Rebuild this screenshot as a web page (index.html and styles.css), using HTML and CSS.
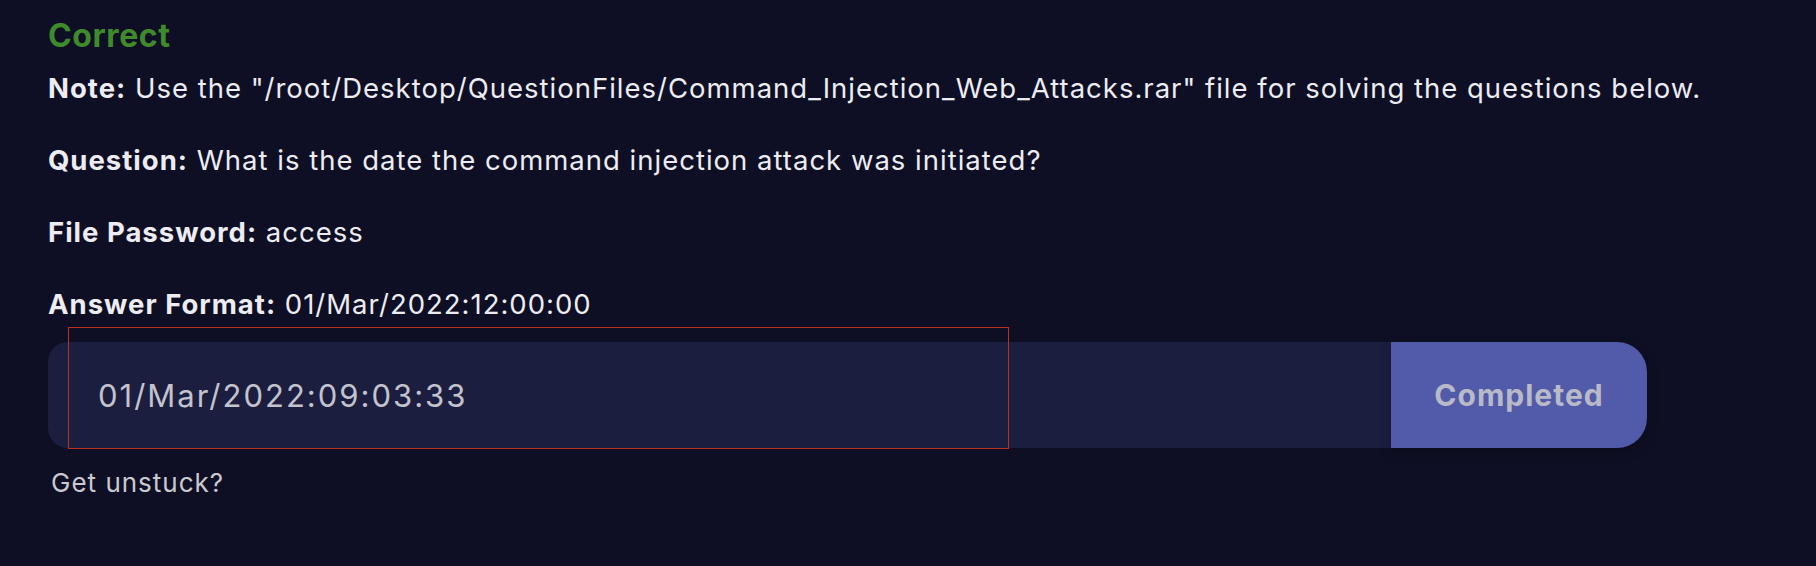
FILE: index.html
```html
<!DOCTYPE html>
<html lang="en">
<head>
<meta charset="utf-8">
<title>Question</title>
<link rel="stylesheet" href="styles.css">
</head>
<body>
<div class="task">
  <h3 class="status">Correct</h3>
  <p class="line"><strong>Note:</strong> Use the "/root/Desktop/QuestionFiles/Command_Injection_Web_Attacks.rar" file for solving the questions below.</p>
  <p class="line"><strong>Question:</strong> What is the date the command injection attack was initiated?</p>
  <p class="line"><strong>File Password:</strong> access</p>
  <p class="line last"><strong>Answer Format:</strong> 01/Mar/2022:12:00:00</p>
  <div class="answer-wrap">
    <form class="answer">
      <div class="field">01/Mar/2022:09:03:33</div>
      <button type="button" class="submit">Completed</button>
    </form>
    <div class="highlight"></div>
  </div>
  <a class="hint">Get unstuck?</a>
</div>
</body>
</html>
```

FILE: styles.css
```css
html, body {
  margin: 0;
  padding: 0;
  background: #0e0f24;
  height: 100%;
}

body {
  font-family: "Inter", "Open Sans", sans-serif;
  color: #ececf2;
}

.task {
  padding: 16px 0 0 48px;
}

.status {
  margin: 0 0 12px;
  font-size: 32px;
  line-height: 40px;
  font-weight: 700;
  letter-spacing: 0.6px;
  color: #3f8a2b;
}

.line {
  margin: 0 0 32px;
  font-size: 27.5px;
  line-height: 40px;
  font-weight: 400;
  letter-spacing: 1px;
}

.line strong {
  font-weight: 700;
}

.line.last {
  margin-bottom: 18px;
}

.answer-wrap {
  position: relative;
  width: 1599px;
}

.answer {
  display: flex;
  height: 106px;
  margin: 0;
}

.field {
  flex: 1;
  display: flex;
  align-items: center;
  padding-left: 50px;
  background: #1c1e40;
  border-radius: 20px 0 0 20px;
  font-size: 31px;
  letter-spacing: 2px;
  color: #c3c3cd;
}

.submit {
  width: 256px;
  border: none;
  background: #515ba9;
  border-radius: 0 30px 30px 0;
  font-family: inherit;
  font-size: 30px;
  font-weight: 700;
  letter-spacing: 1px;
  color: #b9bac8;
  box-shadow: 0 4px 12px rgba(0, 0, 0, 0.25);
}

.highlight {
  position: absolute;
  left: 20px;
  top: -15px;
  width: 941px;
  height: 122px;
  border: 1.5px solid #b8321f;
  box-sizing: border-box;
  pointer-events: none;
}

.hint {
  display: inline-block;
  margin: 17px 0 0 3px;
  font-size: 26px;
  line-height: 36px;
  letter-spacing: 1px;
  color: #c9c9cf;
}
```
